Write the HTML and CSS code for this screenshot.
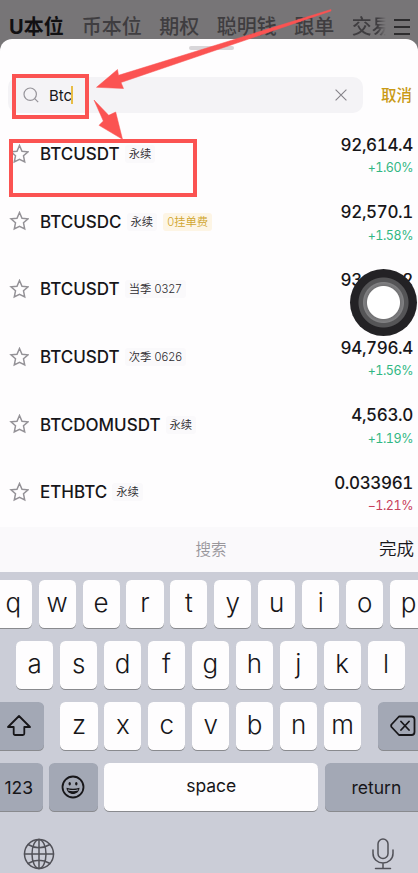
FILE: index.html
```html
<!DOCTYPE html>
<html lang="zh-CN">
<head>
<meta charset="utf-8">
<title>搜索</title>
<link rel="stylesheet" href="styles.css">
</head>
<body>
<svg class="defs" width="0" height="0" aria-hidden="true">
  <symbol id="star" viewBox="0 0 20 20"><path d="M10.500 1.500 13 7.200 19 7.800 14.500 11.800 15.700 17.900 10.500 15.300 5.300 17.900 6.500 11.800 2 7.800 8 7.200Z" fill="none" stroke="#949297" stroke-width="1.500"/></symbol>
</svg>
<main class="screen">
  <nav class="tabs">
    <span class="tab active">U本位</span><span class="tab">币本位</span><span class="tab">期权</span><span class="tab">聪明钱</span><span class="tab">跟单</span><span class="tab last">交易</span>
    <svg class="menu" viewBox="0 0 18 16"><path d="M1 1H17M1 8H17M1 15H17" stroke="#161517" stroke-width="1.5"/></svg>
  </nav>
  <section class="sheet">
    <div class="handle"></div>
    <div class="search-row">
      <div class="search">
        <svg class="glass" viewBox="0 0 16 16"><circle cx="7.2" cy="7.2" r="6.2"/><path d="m11.7 11.7 3.5 3.5"/></svg>
        <span class="query">Btc</span><i class="caret"></i>
        <svg class="clear" viewBox="0 0 12 12"><path d="m.6.6 10.8 10.8M11.4.6.6 11.4"/></svg>
      </div>
      <span class="cancel">取消</span>
    </div>
    <ul class="list">
      <li class="row"><svg class="star"><use href="#star"/></svg><span class="name">BTCUSDT</span><span class="tag">永续</span><div class="quote"><b>92,614.4</b><span class="up">+1.60%</span></div></li>
      <li class="row"><svg class="star"><use href="#star"/></svg><span class="name">BTCUSDC</span><span class="tag">永续</span><span class="tag fee">0挂单费</span><div class="quote"><b>92,570.1</b><span class="up">+1.58%</span></div></li>
      <li class="row"><svg class="star"><use href="#star"/></svg><span class="name">BTCUSDT</span><span class="tag">当季 0327</span><div class="quote"><b>93,388.2</b></div></li>
      <li class="row"><svg class="star"><use href="#star"/></svg><span class="name">BTCUSDT</span><span class="tag">次季 0626</span><div class="quote"><b>94,796.4</b><span class="up">+1.56%</span></div></li>
      <li class="row"><svg class="star"><use href="#star"/></svg><span class="name">BTCDOMUSDT</span><span class="tag">永续</span><div class="quote"><b>4,563.0</b><span class="up">+1.19%</span></div></li>
      <li class="row"><svg class="star"><use href="#star"/></svg><span class="name">ETHBTC</span><span class="tag">永续</span><div class="quote"><b>0.033961</b><span class="down">−1.21%</span></div></li>
    </ul>
  </section>
  <div class="accessory"><span></span><span class="hint">搜索</span><span class="done">完成</span></div>
  <section class="keyboard">
    <div class="keys"><span class="key">q</span><span class="key">w</span><span class="key">e</span><span class="key">r</span><span class="key">t</span><span class="key">y</span><span class="key">u</span><span class="key">i</span><span class="key">o</span><span class="key">p</span></div>
    <div class="keys second"><span class="key">a</span><span class="key">s</span><span class="key">d</span><span class="key">f</span><span class="key">g</span><span class="key">h</span><span class="key">j</span><span class="key">k</span><span class="key">l</span></div>
    <div class="keys">
      <span class="key dark shift"><svg width="26" height="24" viewBox="0 0 26 24"><path d="M13 2 24 13H18.300V19.500Q18.300 21 16.800 21H9.200Q7.700 21 7.700 19.500V13H2Z"/></svg></span>
      <span class="key">z</span><span class="key">x</span><span class="key">c</span><span class="key">v</span><span class="key">b</span><span class="key">n</span><span class="key">m</span>
      <span class="key dark delete"><svg width="26" height="22" viewBox="0 0 26 22"><path d="M9 1.500H21.500Q24.500 1.500 24.500 4.500V17Q24.500 20 21.500 20H9L1.500 12Q.8 10.750 1.500 9.500ZM11 6.500 19 15M19 6.500 11 15"/></svg></span>
    </div>
    <div class="keys">
      <span class="key dark label num">123</span>
      <span class="key dark emoji"><svg width="24" height="24" viewBox="0 0 24 24"><circle cx="12" cy="12" r="10.500"/><path class="fill" d="M5.500 12.700Q12 14.800 18.500 12.700C18.200 21 5.800 21 5.500 12.700Z"/><path class="teeth" d="M7.300 15Q12 16.400 16.700 15"/><ellipse class="fill" cx="8.700" cy="8.800" rx="1.200" ry="1.700"/><ellipse class="fill" cx="15.300" cy="8.800" rx="1.200" ry="1.700"/></svg></span>
      <span class="key label space">space</span>
      <span class="key dark label return">return</span>
    </div>
    <div class="bottom">
      <svg width="32" height="32" viewBox="0 0 32 32"><circle cx="16" cy="16" r="14.500"/><ellipse cx="16" cy="16" rx="7" ry="14.500"/><path d="M16 1.500V30.500M1.500 16H30.500M5 6.500Q16 13 27 6.500M5 25.500Q16 19 27 25.500"/></svg>
      <svg width="22" height="34" viewBox="0 0 22 34"><rect x="6" y="1" width="10" height="19.500" rx="5"/><path d="M1 12V15.500A10 9.500 0 0 0 21 15.500V12M11 25V30.500M3.500 30.500H18.500"/></svg>
    </div>
  </section>
  <div class="assist"></div>
  <svg class="notes" viewBox="0 0 418 200">
    <rect x="14" y="76" width="73" height="41" stroke-width="4"/>
    <rect x="11" y="141" width="184" height="54" stroke-width="4"/>
    <path class="arrow" d="M331 9.500 118.500 75.300 117.500 69.500 96.500 87.300 123.500 88.500 121 82.500 331 11Z"/>
    <path class="arrow" d="M94 100 103.300 121 99 125.300 122.500 139.300 115.700 112 108.700 115.300Z"/>
  </svg>
</main>
</body>
</html>
```
FILE: styles.css
```css
* { box-sizing: border-box; }
body { margin: 0; }
.defs { position: absolute; }
.screen {
  position: relative;
  width: 418px;
  height: 873px;
  overflow: hidden;
  background: #777577;
  color: #171619;
  font-family: Inter, "Noto Sans CJK SC", sans-serif;
  display: flex;
  flex-direction: column;
}
.tabs {
  height: 39px;
  flex: none;
  display: flex;
  align-items: center;
  padding: 14px 7px 0 9px;
  font-size: 20px;
  line-height: 24px;
  font-weight: 500;
  color: #3f3d40;
  white-space: nowrap;
}
.tab { margin-right: 17.500px; }
.tab.active { margin-right: 18px; color: #111012; font-weight: 700; }
.tab.last {
  width: 34px;
  margin-right: auto;
  overflow: hidden;
  -webkit-mask-image: linear-gradient(90deg, #000 75%, transparent);
  mask-image: linear-gradient(90deg, #000 75%, transparent);
}
.menu { width: 18px; height: 16px; flex: none; }

.sheet {
  height: 488px;
  flex: none;
  background: #fefdfe;
  border-radius: 12px 12px 0 0;
  display: flex;
  flex-direction: column;
}
.handle { width: 45px; height: 4px; margin: 7px 0 0 189px; border-radius: 2px; background: #d8d6d9; }
.search-row { display: flex; align-items: center; margin: 27px 6px 0 8px; }
.search {
  width: 355px;
  height: 36px;
  border-radius: 10px;
  background: #f4f3f6;
  display: flex;
  align-items: center;
  padding: 0 16px 0 15px;
}
.glass { width: 16px; height: 16px; fill: none; stroke: #96949a; stroke-width: 1.2; }
.query { margin-left: 10px; font-size: 15px; letter-spacing: -.1px; }
.caret { width: 2px; height: 18px; margin-left: -1px; background: #e8bd45; }
.clear { width: 12px; height: 12px; margin-left: auto; fill: none; stroke: #858389; stroke-width: 1.1; }
.cancel { margin: -2px 0 0 18px; font-size: 15.500px; font-weight: 500; color: #c99a16; white-space: nowrap; }

.list { list-style: none; margin: 7px 0 0; padding: 0; }
.row { height: 67.6px; display: flex; align-items: center; padding: 0 5px 0 9px; }
.star { width: 20px; height: 20px; flex: none; }
.name { margin: 1px 0 0 11px; font-size: 17px; font-weight: 500; line-height: 24px; }
.tag {
  height: 18px;
  margin: 1px 0 0 5px;
  padding: 0 4px;
  border-radius: 3px;
  background: #faf9fb;
  font-size: 11.3px;
  line-height: 18px;
  font-weight: 350;
  color: #2c2a2e;
  white-space: nowrap;
}
.tag.fee { margin-left: 6px; background: #fdf5e5; color: #d0a52e; }
.quote {
  height: 44px;
  margin-left: auto;
  text-align: right;
  display: flex;
  flex-direction: column;
  gap: 3.500px;
  font-variant-numeric: tabular-nums;
}
.quote b { font-size: 17px; line-height: 24px; font-weight: 500; margin-top: 1px; letter-spacing: -.35px; }
.quote span { font-size: 12.500px; line-height: 16px; letter-spacing: -.45px; }
.up { color: #31b783; }
.down { color: #c7405a; }

.accessory {
  height: 45px;
  flex: none;
  background: #faf9fb;
  display: grid;
  grid-template-columns: 1fr auto 1fr;
  align-items: center;
  padding: 0 4px 4px 8px;
}
.hint { font-size: 15.500px; font-weight: 350; color: #99979c; }
.done { justify-self: end; font-size: 17.500px; font-weight: 350; }

.keyboard { flex: 1; background: #cbcdd7; padding: 8px 0 0; }
.keys {
  width: 432.500px;
  height: 48px;
  margin: 0 0 13px -5.300px;
  display: flex;
  gap: 6.900px;
}
.keys.second { padding-left: 21.500px; }
.key {
  width: 37.040px;
  height: 48px;
  flex: none;
  border-radius: 5.500px;
  background: #fefdfe;
  box-shadow: 0 1px 0 #898a8e;
  display: flex;
  align-items: center;
  justify-content: center;
  padding-bottom: 4px;
  font-size: 26px;
  font-weight: 300;
}
.key svg { fill: none; stroke: #171619; stroke-width: 1.8; stroke-linejoin: round; stroke-linecap: round; }
.key .fill { fill: #171619; stroke: none; }
.key .teeth { stroke: #a3a8b5; stroke-width: 1.2; }
.dark { background: #a3a8b5; padding-bottom: 0; }
.label { font-size: 17.500px; font-weight: 400; }
.shift { width: 49.500px; margin-right: 9.400px; }
.delete { width: 49.500px; margin-left: 10.400px; }
.num { width: 48px; }
.emoji { width: 48.500px; margin-left: -.500px; }
.space { width: 213.500px; }
.return { width: 103px; }
.bottom { display: flex; justify-content: space-between; padding: 14px 24.500px 0 23px; }
.bottom svg { fill: none; stroke: #515158; stroke-width: 1.500; stroke-linecap: round; }

.assist {
  position: absolute;
  left: 350px;
  top: 269px;
  width: 67px;
  height: 67px;
  border-radius: 50%;
  background: radial-gradient(circle, #fff 16px, #737375 17px, #808082 20px, #555557 21px, #555557 24.500px, #232225 25.500px);
}
.notes { position: absolute; left: 0; top: 0; width: 418px; height: 200px; fill: none; stroke: #fb5352; }
.arrow { fill: #fb5352; stroke-width: .5; }
```
